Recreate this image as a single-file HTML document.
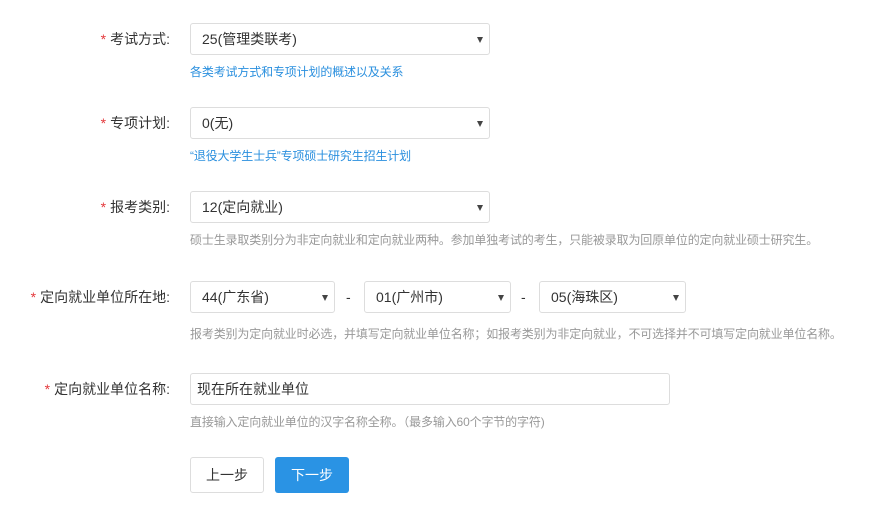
<!DOCTYPE html><html><head><meta charset="utf-8"><style>
body{margin:0;width:877px;height:511px;background:#fff;font-family:"Liberation Sans","Noto Sans CJK SC",sans-serif;color:#333;position:relative;overflow:hidden}
.a{position:absolute}
.lbl{position:absolute;right:707px;font-size:14px;line-height:20px;white-space:nowrap}
.lbl b{color:#e4393c;font-weight:normal;margin-right:4px}
.sel{position:absolute;height:30px;border:1px solid #ddd;border-radius:3px;font-size:14px;line-height:30px;padding-left:11px;box-sizing:content-box}
.sel:after{content:"";position:absolute;right:6px;top:13px;border:3px solid transparent;border-top:6px solid #444;border-bottom:0}
.help{position:absolute;left:190px;font-size:12px;letter-spacing:-0.15px;line-height:14px;color:#999;white-space:nowrap}
.blue{color:#2a8fde}
.btn{position:absolute;top:457px;height:34px;width:72px;border-radius:3px;font-size:14px;line-height:34px;text-align:center}
.n:after{display:none}
</style></head><body>
<div class="lbl" style="top:29px"><b>*</b>考试方式:</div>
<div class="sel" style="left:190px;top:23px;width:287px">25(管理类联考)</div>
<div class="help blue" style="top:65px">各类考试方式和专项计划的概述以及关系</div>
<div class="lbl" style="top:113px"><b>*</b>专项计划:</div>
<div class="sel" style="left:190px;top:107px;width:287px">0(无)</div>
<div class="help blue" style="top:149px">“退役大学生士兵”专项硕士研究生招生计划</div>
<div class="lbl" style="top:197px"><b>*</b>报考类别:</div>
<div class="sel" style="left:190px;top:191px;width:287px">12(定向就业)</div>
<div class="help" style="top:233px">硕士生录取类别分为非定向就业和定向就业两种。参加单独考试的考生，只能被录取为回原单位的定向就业硕士研究生。</div>
<div class="lbl" style="top:287px"><b>*</b>定向就业单位所在地:</div>
<div class="sel" style="left:190px;top:281px;width:132px">44(广东省)</div>
<div class="a" style="left:346px;top:289px;font-size:14px">-</div>
<div class="sel" style="left:364px;top:281px;width:134px">01(广州市)</div>
<div class="a" style="left:521px;top:289px;font-size:14px">-</div>
<div class="sel" style="left:539px;top:281px;width:134px">05(海珠区)</div>
<div class="help" style="top:327px">报考类别为定向就业时必选，并填写定向就业单位名称；如报考类别为非定向就业，不可选择并不可填写定向就业单位名称。</div>
<div class="lbl" style="top:379px"><b>*</b>定向就业单位名称:</div>
<div class="sel n" style="left:190px;top:373px;width:472px;padding-left:6px">现在所在就业单位</div>
<div class="help" style="top:415px">直接输入定向就业单位的汉字名称全称。（最多输入60个字节的字符)</div>
<div class="btn" style="left:190px;border:1px solid #ddd;width:72px;height:34px">上一步</div>
<div class="btn" style="left:275px;background:#2a93e4;color:#fff;width:74px;height:36px;line-height:36px">下一步</div>
</body></html>
